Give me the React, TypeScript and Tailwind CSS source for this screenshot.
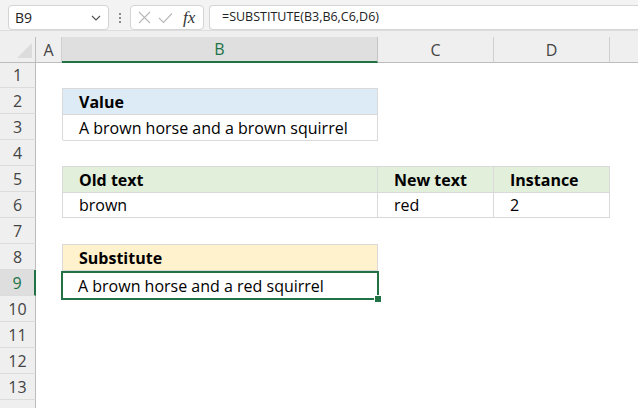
import React from "react";

const ROWS = 14;
const cellFont = { fontFamily: "'Open Sans', 'Noto Sans', sans-serif" };
const uiFont = { fontFamily: "'Open Sans', 'Noto Sans', sans-serif" };

function RowHeader({ n }: { n: number }) {
  const sel = n === 9;
  return (
    <div
      className={
        "h-[26px] flex items-center justify-center border-b border-[#dcdcdc] text-[16px] " +
        (sel
          ? "bg-[#dedede] text-[#217346] border-r-2 border-r-[#217346]"
          : "bg-[#efefef] text-[#444] border-r border-r-[#bdbdbd]")
      }
      style={uiFont}
    >
      {n <= 13 ? n : ""}
    </div>
  );
}

function Cell({
  children,
  bg = "bg-white",
  bold = false,
  className = "",
}: {
  children?: React.ReactNode;
  bg?: string;
  bold?: boolean;
  className?: string;
}) {
  return (
    <div
      className={
        "flex-1 flex items-center pl-4 pt-[1px] text-[16px] text-black border-r border-b border-[#d9d9d9] " +
        bg +
        (bold ? " font-bold" : "") +
        " " +
        className
      }
      style={cellFont}
    >
      {children}
    </div>
  );
}

export default function App() {
  const rows = Array.from({ length: ROWS }, (_, i) => i + 1);
  return (
    <div className="w-[638px] h-[408px] overflow-hidden bg-white relative">
      {/* Formula bar */}
      <div className="h-[31px] bg-[#f3f3f3] border-b border-[#dedede] flex items-start pt-[5px] pl-2">
        <div className="w-[101px] h-[25px] bg-white border border-[#d4d4d4] rounded-[4px] flex items-center justify-between pl-[6px] pr-[7px]">
          <span className="text-[14px] text-[#222]" style={uiFont}>B9</span>
          <svg width="10" height="6" viewBox="0 0 10 6">
            <path d="M1 1 L5 5 L9 1" fill="none" stroke="#555" strokeWidth="1.2" />
          </svg>
        </div>
        <div className="w-[21px] h-[25px] flex flex-col items-center justify-center gap-[2px]">
          <div className="w-[2px] h-[2px] bg-[#8a8a8a]" />
          <div className="w-[2px] h-[2px] bg-[#8a8a8a]" />
          <div className="w-[2px] h-[2px] bg-[#8a8a8a]" />
        </div>
        <div className="w-[74px] h-[25px] bg-white border border-[#d4d4d4] rounded-[4px] flex items-center pl-[7px]">
          <svg width="13" height="13" viewBox="0 0 13 13">
            <path d="M1 1 L12 12 M12 1 L1 12" stroke="#b8b8b8" strokeWidth="1.1" />
          </svg>
          <svg width="15" height="12" viewBox="0 0 15 12" className="ml-[7px]">
            <path d="M1 6 L5.5 10.5 L14 1.5" fill="none" stroke="#b8b8b8" strokeWidth="1.1" />
          </svg>
          <span
            className="ml-[10px] text-[17px] italic text-[#333] leading-none"
            style={{ fontFamily: "'Liberation Serif', 'DejaVu Serif', serif" }}
          >
            fx
          </span>
        </div>
        <div className="ml-[5px] flex-1 h-[25px] bg-white border border-r-0 border-[#d4d4d4] rounded-l-[4px] flex items-center pl-[12px]">
          <span className="text-[12.5px] text-[#222]" style={uiFont}>
            =SUBSTITUTE(B3,B6,C6,D6)
          </span>
        </div>
      </div>
      {/* gap */}
      <div className="h-[6px] bg-[#efefef]" />
      {/* Column headers */}
      <div
        className="grid grid-cols-[36px_26px_316px_116px_116px_1fr] h-[25px] bg-[#efefef] text-[16px] text-[#444]"
        style={uiFont}
      >
        <div className="border-r border-b border-[#bdbdbd] relative">
          <div
            className="absolute right-[3px] bottom-[4px] w-[15px] h-[15px] bg-[#dcdcdc]"
            style={{ clipPath: "polygon(100% 0, 100% 100%, 0 100%)" }}
          />
        </div>
        <div className="flex items-center justify-center border-r border-r-[#d0d0d0] border-b border-b-[#bdbdbd]">A</div>
        <div className="flex items-center justify-center bg-[#dfdfdf] text-[#217346] border-r border-r-[#c4c4c4] border-b-2 border-b-[#217346]">B</div>
        <div className="flex items-center justify-center border-r border-r-[#d0d0d0] border-b border-b-[#bdbdbd]">C</div>
        <div className="flex items-center justify-center border-r border-r-[#d0d0d0] border-b border-b-[#bdbdbd]">D</div>
        <div className="border-b border-b-[#bdbdbd]" />
      </div>
      {/* Sheet body */}
      <div className="grid grid-cols-[36px_26px_316px_116px_116px_1fr] grid-rows-[repeat(14,26px)]">
        {rows.map((n) => (
          <div key={n} style={{ gridColumn: 1, gridRow: n }}>
            <RowHeader n={n} />
          </div>
        ))}
        {/* Value table */}
        <div
          className="flex flex-col border-t border-l border-[#d9d9d9]"
          style={{ gridColumn: 3, gridRow: "2 / span 2" }}
        >
          <Cell bg="bg-[#ddebf7]" bold>Value</Cell>
          <Cell>A brown horse and a brown squirrel</Cell>
        </div>
        {/* Old/new table */}
        <div
          className="grid grid-cols-[315px_116px_116px] grid-rows-2 border-t border-l border-[#d9d9d9]"
          style={{ gridColumn: "3 / span 3", gridRow: "5 / span 2" }}
        >
          <Cell bg="bg-[#e2efda]" bold>Old text</Cell>
          <Cell bg="bg-[#e2efda]" bold>New text</Cell>
          <Cell bg="bg-[#e2efda]" bold>Instance</Cell>
          <Cell>brown</Cell>
          <Cell>red</Cell>
          <Cell>2</Cell>
        </div>
        {/* Substitute table */}
        <div
          className="flex flex-col border-t border-l border-[#d9d9d9]"
          style={{ gridColumn: 3, gridRow: "8 / span 2" }}
        >
          <Cell bg="bg-[#fff2cc]" bold>Substitute</Cell>
          <div className="flex-1 relative -ml-[2px] -mb-[1px] -mr-[1px] border-2 border-[#217346] flex items-center pl-[15px] pt-[1px] text-[16px] text-black bg-white" style={cellFont}>
            A brown horse and a red squirrel
            <div className="absolute -right-[4px] -bottom-[4px] w-[6px] h-[6px] bg-[#217346] outline outline-1 outline-white" />
          </div>
        </div>
      </div>
    </div>
  );
}
